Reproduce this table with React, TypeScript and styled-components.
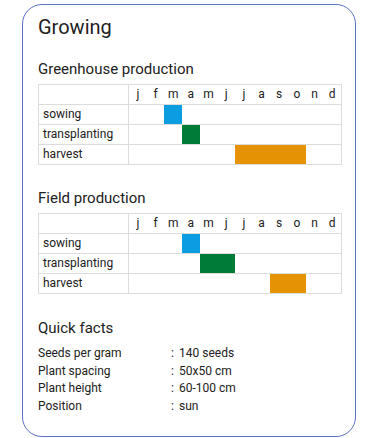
import React from "react";
import styled, { createGlobalStyle } from "styled-components";

const GlobalStyle = createGlobalStyle`
    body {
        margin: 0;
        background: #ffffff;
        font-family: Roboto, "Noto Sans", Arial, sans-serif;
        color: #212121;
    }
`;

const Card = styled.section`
    box-sizing: border-box;
    width: 334px;
    margin: 4px 0 0 22px;
    padding: 10px 15px 20px 15px;
    border: 1px solid #5b72c2;
    border-radius: 20px;
`;

const Title = styled.h2`
    margin: 0;
    font-size: 20px;
    line-height: 24px;
    font-weight: 400;
`;

const Section = styled.div<{ $gap: number }>`
    margin-top: ${(p) => p.$gap}px;
`;

const Heading = styled.h3<{ $after?: number }>`
    margin: 0 0 ${(p) => p.$after ?? 6}px 0;
    font-size: 15px;
    line-height: 18px;
    font-weight: 400;
`;

const Table = styled.div`
    box-sizing: border-box;
    width: 304px;
    border: 1px solid #dcdcdc;
    font-size: 12px;
`;

const Row = styled.div`
    box-sizing: border-box;
    display: grid;
    grid-template-columns: 90px repeat(12, 1fr);
    height: 19px;

    & + & {
        height: 20px;
        border-top: 1px solid #dcdcdc;
    }
`;

const Label = styled.div`
    box-sizing: border-box;
    padding-left: 4px;
    border-right: 1px solid #dcdcdc;
    line-height: 19px;
`;

const Month = styled.div`
    text-align: center;
    line-height: 19px;
`;

const Cell = styled.div<{ $color?: string }>`
    background: ${(p) => p.$color ?? "transparent"};
`;

const Facts = styled.div`
    display: grid;
    grid-template-columns: 133px 8px auto;
    font-size: 12px;
    line-height: 17.7px;
`;

const months = ["j", "f", "m", "a", "m", "j", "j", "a", "s", "o", "n", "d"];

const BLUE = "#0b9de0";
const GREEN = "#007c37";
const ORANGE = "#e59304";

type Task = { name: string; from: number; to: number; color: string };

const greenhouse: Task[] = [
    { name: "sowing", from: 2, to: 2, color: BLUE },
    { name: "transplanting", from: 3, to: 3, color: GREEN },
    { name: "harvest", from: 6, to: 9, color: ORANGE },
];

const field: Task[] = [
    { name: "sowing", from: 3, to: 3, color: BLUE },
    { name: "transplanting", from: 4, to: 5, color: GREEN },
    { name: "harvest", from: 8, to: 9, color: ORANGE },
];

const facts = [
    ["Seeds per gram", "140 seeds"],
    ["Plant spacing", "50x50 cm"],
    ["Plant height", "60-100 cm"],
    ["Position", "sun"],
];

const Calendar = ({ tasks }: { tasks: Task[] }) => (
    <Table>
        <Row>
            <Label />
            {months.map((m, i) => (
                <Month key={i}>{m}</Month>
            ))}
        </Row>
        {tasks.map((t) => (
            <Row key={t.name}>
                <Label>{t.name}</Label>
                {months.map((_, i) => (
                    <Cell
                        key={i}
                        $color={i >= t.from && i <= t.to ? t.color : undefined}
                    />
                ))}
            </Row>
        ))}
    </Table>
);

const App = () => {
    return (
        <>
            <GlobalStyle />
            <Card>
                <Title>Growing</Title>
                <Section $gap={21}>
                    <Heading>Greenhouse production</Heading>
                    <Calendar tasks={greenhouse} />
                </Section>
                <Section $gap={24}>
                    <Heading>Field production</Heading>
                    <Calendar tasks={field} />
                </Section>
                <Section $gap={25}>
                    <Heading $after={8}>Quick facts</Heading>
                    <Facts>
                        {facts.map(([k, v]) => (
                            <React.Fragment key={k}>
                                <span>{k}</span>
                                <span>:</span>
                                <span>{v}</span>
                            </React.Fragment>
                        ))}
                    </Facts>
                </Section>
            </Card>
        </>
    );
};

export default App;
